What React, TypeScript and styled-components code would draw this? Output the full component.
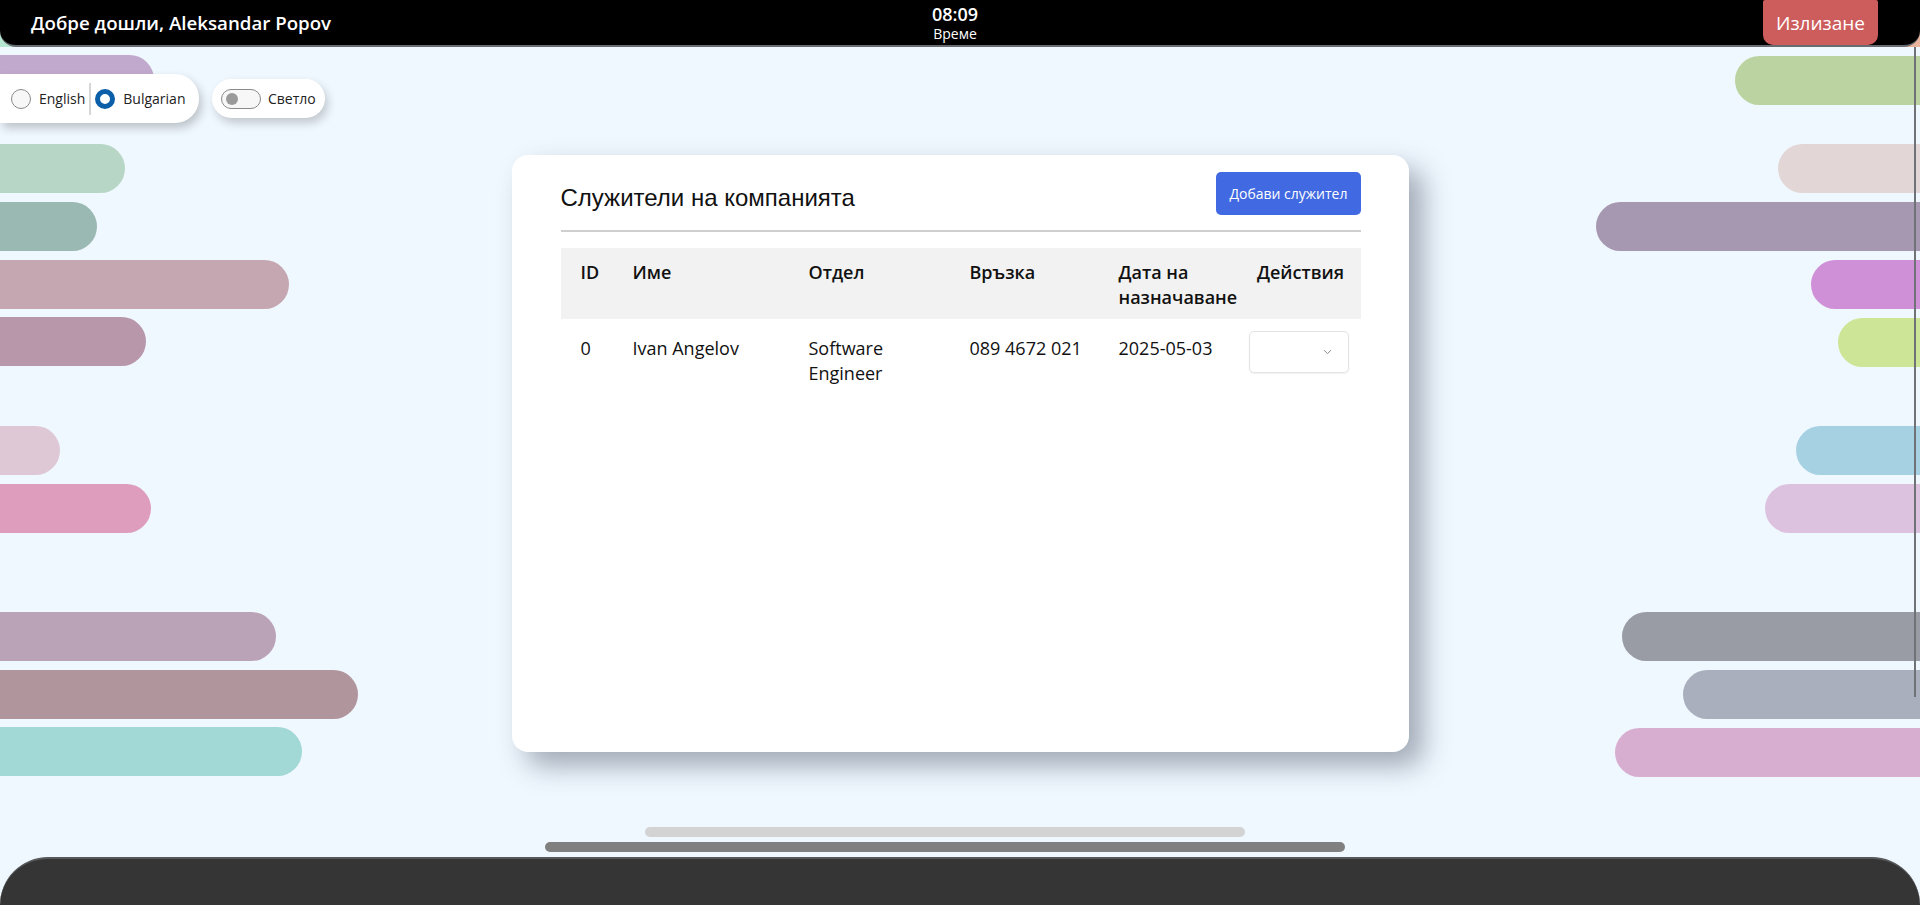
import React from 'react';
import styled, { createGlobalStyle } from 'styled-components';

type Side = 'left' | 'right';

interface PillSpec {
  top: number;
  width: number;
  color: string;
}

const PILL_HEIGHT = 49;

const leftPills: PillSpec[] = [
  { top: 55, width: 154, color: '#c1a9cd' },
  { top: 144, width: 125, color: '#b8d6c5' },
  { top: 202, width: 97, color: '#9ab9b3' },
  { top: 260, width: 289, color: '#c5a7b1' },
  { top: 317, width: 146, color: '#b897ab' },
  { top: 426, width: 60, color: '#dfc8d6' },
  { top: 484, width: 151, color: '#df9dbe' },
  { top: 612, width: 276, color: '#bba3b7' },
  { top: 670, width: 358, color: '#b0959c' },
  { top: 727, width: 302, color: '#a2d8d6' },
];

const rightPills: PillSpec[] = [
  { top: 56, width: 185, color: '#bad3a0' },
  { top: 144, width: 142, color: '#e2d7d6' },
  { top: 202, width: 324, color: '#a698b0' },
  { top: 260, width: 109, color: '#cf90d8' },
  { top: 318, width: 82, color: '#cde597' },
  { top: 426, width: 124, color: '#a6d1e3' },
  { top: 484, width: 155, color: '#ddc2e0' },
  { top: 612, width: 298, color: '#999ca5' },
  { top: 670, width: 237, color: '#a9afbd' },
  { top: 728, width: 305, color: '#d8aed0' },
];

const GlobalStyle = createGlobalStyle`
  html, body {
    margin: 0;
    padding: 0;
  }

  body {
    font-family: 'Open Sans', 'Noto Sans', sans-serif;
    background-color: #f0f8ff;
    color: #111;
    overflow: hidden;
  }

  * {
    box-sizing: border-box;
  }
`;

const Page = styled.div`
  position: relative;
  height: 100vh;
  display: flex;
  flex-direction: column;
  overflow: hidden;
  background-color: #f0f8ff;
`;

const Backdrop = styled.div`
  position: absolute;
  inset: 0;
  display: flex;
  justify-content: space-between;
  pointer-events: none;
  z-index: 0;
`;

const Lane = styled.div<{ $side: Side }>`
  display: flex;
  flex-direction: column;
  align-items: ${(p) => (p.$side === 'left' ? 'flex-start' : 'flex-end')};
`;

const Pill = styled.div<{ $side: Side; $width: number; $offset: number; $color: string }>`
  flex: 0 0 auto;
  height: ${PILL_HEIGHT}px;
  width: ${(p) => p.$width}px;
  margin-top: ${(p) => p.$offset}px;
  background-color: ${(p) => p.$color};
  border-radius: ${(p) => (p.$side === 'left' ? '0 25px 25px 0' : '25px 0 0 25px')};
`;

const RightRail = styled.div`
  position: absolute;
  top: 46px;
  right: 4px;
  width: 2px;
  height: 651px;
  background-color: #6f7378;
  z-index: 1;
`;

const HeaderShell = styled.header`
  position: relative;
  z-index: 2;
  background: linear-gradient(90deg, #b6e7d3 50%, #e9b39c 50%);
`;

const HeaderBar = styled.div`
  height: 47px;
  display: grid;
  grid-template-columns: 1fr auto 1fr;
  align-items: start;
  background-color: #000;
  border-bottom: 2px solid #686c70;
  border-radius: 0 0 16px 16px;
  color: #fff;
`;

const Greeting = styled.div`
  padding-left: 31px;
  font-size: 18.7px;
  font-weight: 600;
  line-height: 45px;
  white-space: nowrap;
`;

const Clock = styled.div`
  display: flex;
  flex-direction: column;
  align-items: center;
  padding-top: 3px;
  margin-left: -10px;
`;

const ClockTime = styled.span`
  font-size: 18px;
  font-weight: 600;
  line-height: 22px;
`;

const ClockLabel = styled.span`
  font-size: 14px;
  line-height: 17px;
`;

const LogoutButton = styled.button`
  justify-self: end;
  margin-right: 42px;
  width: 115px;
  height: 45px;
  border: none;
  border-radius: 2px 2px 10px 10px;
  background-color: #cd5c5c;
  color: #fff;
  font-family: 'Open Sans', sans-serif;
  font-size: 19px;
  cursor: pointer;
`;

const Toolbar = styled.div`
  position: relative;
  z-index: 1;
  display: flex;
  align-items: center;
  gap: 13px;
  height: 49px;
  margin-top: 27px;
`;

const LangBox = styled.div`
  display: flex;
  align-items: center;
  width: 199px;
  height: 49px;
  padding-left: 11px;
  background-color: #fff;
  border-radius: 0 24px 24px 0;
  box-shadow: 3px 5px 10px rgba(0, 0, 0, 0.22);
`;

const LangOption = styled.label`
  display: flex;
  align-items: center;
  gap: 8px;
  font-size: 14px;
  color: #222;
  cursor: pointer;
`;

const Radio = styled.span<{ $checked?: boolean }>`
  width: 20px;
  height: 20px;
  border-radius: 50%;
  background-color: ${(p) => (p.$checked ? '#fff' : '#f7f7f7')};
  border: ${(p) => (p.$checked ? '5px solid #0b5ea8' : '1px solid #8a8a8a')};
`;

const LangDivider = styled.span`
  width: 2px;
  height: 32px;
  margin: 0 4px;
  background-color: #d6d6d6;
`;

const ThemePill = styled.div`
  display: flex;
  align-items: center;
  gap: 7px;
  height: 39px;
  padding: 0 9px 0 9px;
  background-color: #fff;
  border-radius: 20px;
  box-shadow: 3px 5px 10px rgba(0, 0, 0, 0.2);
  font-size: 14px;
  color: #222;
`;

const Switch = styled.span`
  display: flex;
  align-items: center;
  width: 40px;
  height: 20px;
  padding-left: 4px;
  border: 1px solid #8a8a8a;
  border-radius: 10px;
  background-color: #f7f7f7;
`;

const Knob = styled.span`
  width: 12px;
  height: 12px;
  border-radius: 50%;
  background-color: #9a9a9a;
`;

const Card = styled.section`
  position: relative;
  z-index: 1;
  align-self: center;
  width: 897px;
  height: 597px;
  margin-top: 32px;
  padding: 17px 48px 0 49px;
  background-color: #fff;
  border-radius: 16px;
  box-shadow: 14px 14px 28px rgba(30, 40, 60, 0.38);
`;

const CardHead = styled.div`
  display: flex;
  align-items: center;
  justify-content: space-between;
`;

const CardTitle = styled.h2`
  margin: 0;
  padding-top: 8px;
  font-family: 'Liberation Sans', Arial, sans-serif;
  font-size: 24px;
  font-weight: 400;
  color: #111;
`;

const AddButton = styled.button`
  height: 43px;
  padding: 0 13px;
  border: none;
  border-radius: 5px;
  background-color: #4169e1;
  color: #fff;
  font-family: 'Open Sans', sans-serif;
  font-size: 14px;
  cursor: pointer;
`;

const Rule = styled.hr`
  height: 2px;
  margin: 15px 0 0;
  border: none;
  background-color: #cfcfcf;
`;

const Table = styled.table`
  width: 100%;
  margin-top: 16px;
  border-collapse: collapse;
  table-layout: fixed;
`;

const Th = styled.th<{ $align?: 'left' | 'center' | 'right' }>`
  padding: 12px 8px 9px;
  background-color: #f2f2f2;
  font-size: 18px;
  font-weight: 600;
  line-height: 25px;
  text-align: ${(p) => p.$align ?? 'left'};
  vertical-align: top;
  color: #111;

  &:first-child {
    padding-left: 20px;
  }
`;

const Td = styled.td<{ $align?: 'left' | 'center' | 'right' }>`
  padding: 17px 8px 16px;
  font-size: 18px;
  line-height: 25px;
  text-align: ${(p) => p.$align ?? 'left'};
  vertical-align: top;
  color: #111;

  &:first-child {
    padding-left: 20px;
  }
`;

const ActionSelect = styled.div`
  display: flex;
  align-items: center;
  justify-content: flex-end;
  width: 100px;
  height: 42px;
  margin-top: -5px;
  padding-right: 16px;
  border: 1px solid #e3e3e3;
  border-radius: 5px;
  background-color: #fff;
  box-shadow: 0 1px 2px rgba(0, 0, 0, 0.06);
`;

const ScrollTrack = styled.div<{ $width: number; $tone: string; $gap: number }>`
  position: relative;
  z-index: 1;
  align-self: center;
  flex: 0 0 auto;
  width: ${(p) => p.$width}px;
  height: 10px;
  margin-top: ${(p) => p.$gap}px;
  margin-right: 30px;
  border-radius: 5px;
  background-color: ${(p) => p.$tone};
`;

const Footer = styled.footer`
  position: relative;
  z-index: 1;
  flex: 1 0 47px;
  margin-top: 5px;
  background-color: #353535;
  border-top: 2px solid #56585a;
  border-radius: 56px 56px 0 0;
`;

const columns = [64, 176, 161, 149, 130, 120];

const PillLane = ({ side, pills }: { side: Side; pills: PillSpec[] }) => (
  <Lane $side={side}>
    {pills.map((pill, i) => (
      <Pill
        key={i}
        $side={side}
        $width={pill.width}
        $color={pill.color}
        $offset={i === 0 ? pill.top : pill.top - pills[i - 1].top - PILL_HEIGHT}
      />
    ))}
  </Lane>
);

const Chevron = () => (
  <svg width='9' height='6' viewBox='0 0 9 6' fill='none'>
    <path d='M1 1.2 L4.5 4.6 L8 1.2' stroke='#8c8c8c' strokeWidth='1' />
  </svg>
);

export default function App() {
  return (
    <>
      <GlobalStyle />
      <Page>
        <Backdrop>
          <PillLane side='left' pills={leftPills} />
          <PillLane side='right' pills={rightPills} />
        </Backdrop>
        <RightRail />

        <HeaderShell>
          <HeaderBar>
            <Greeting>Добре дошли, Aleksandar Popov</Greeting>
            <Clock>
              <ClockTime>08:09</ClockTime>
              <ClockLabel>Време</ClockLabel>
            </Clock>
            <LogoutButton>Излизане</LogoutButton>
          </HeaderBar>
        </HeaderShell>

        <Toolbar>
          <LangBox>
            <LangOption>
              <Radio />
              English
            </LangOption>
            <LangDivider />
            <LangOption>
              <Radio $checked />
              Bulgarian
            </LangOption>
          </LangBox>
          <ThemePill>
            <Switch>
              <Knob />
            </Switch>
            Светло
          </ThemePill>
        </Toolbar>

        <Card>
          <CardHead>
            <CardTitle>Служители на компанията</CardTitle>
            <AddButton>Добави служител</AddButton>
          </CardHead>
          <Rule />
          <Table>
            <colgroup>
              {columns.map((w, i) => (
                <col key={i} style={{ width: w }} />
              ))}
            </colgroup>
            <thead>
              <tr>
                <Th>ID</Th>
                <Th>Име</Th>
                <Th>Отдел</Th>
                <Th>Връзка</Th>
                <Th>Дата на назначаване</Th>
                <Th $align='center'>Действия</Th>
              </tr>
            </thead>
            <tbody>
              <tr>
                <Td>0</Td>
                <Td>Ivan Angelov</Td>
                <Td>Software Engineer</Td>
                <Td>089 4672 021</Td>
                <Td>2025-05-03</Td>
                <Td>
                  <ActionSelect>
                    <Chevron />
                  </ActionSelect>
                </Td>
              </tr>
            </tbody>
          </Table>
        </Card>

        <ScrollTrack $width={600} $tone='#d3d3d3' $gap={75} />
        <ScrollTrack $width={800} $tone='#808080' $gap={5} />
        <Footer />
      </Page>
    </>
  );
}
